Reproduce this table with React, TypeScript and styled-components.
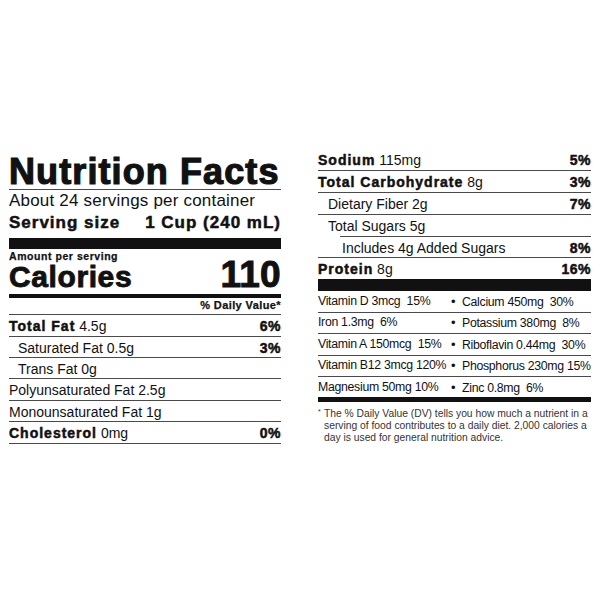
import React from 'react';
import styled, { createGlobalStyle } from 'styled-components';

const Global = createGlobalStyle`
  html, body { margin: 0; padding: 0; background: #fff; }
  body { font-family: "Liberation Sans", Arial, Helvetica, sans-serif; color: #111; }
`;

const LINE = '#4a4a4a';

const Page = styled.div`
  width: 600px;
  height: 600px;
  box-sizing: border-box;
  display: flex;
  align-items: flex-start;
  gap: 37px;
  padding: 0 9px;
`;

const Panel = styled.section<{ $top: number; $w: number }>`
  width: ${p => p.$w}px;
  margin-top: ${p => p.$top}px;
  display: flex;
  flex-direction: column;
`;

const Title = styled.h1`
  margin: 0;
  font-size: 36px;
  line-height: 35px;
  font-weight: 700;
  letter-spacing: 1.1px;
  -webkit-text-stroke: 1.2px #111;
  white-space: nowrap;
  border-bottom: 1px solid ${LINE};
`;

const Servings = styled.div`
  margin-top: 2px;
  font-size: 17px;
  line-height: 18px;
  letter-spacing: 0.2px;
  white-space: nowrap;
`;

const ServingSize = styled.div`
  margin-top: 3px;
  display: flex;
  justify-content: space-between;
  font-size: 17px;
  line-height: 20px;
  font-weight: 700;
  letter-spacing: 1px;
  -webkit-text-stroke: 0.5px #111;
  white-space: nowrap;
`;

const Bar = styled.div<{ $h: number; $mt?: number }>`
  height: ${p => p.$h}px;
  margin-top: ${p => p.$mt ?? 0}px;
  background: #111;
  flex-shrink: 0;
`;

const Amount = styled.div`
  margin-top: 1px;
  font-size: 10.5px;
  line-height: 12px;
  font-weight: 700;
  letter-spacing: 0.55px;
  -webkit-text-stroke: 0.25px #111;
`;

const CaloriesRow = styled.div`
  margin-top: 1px;
  display: flex;
  justify-content: space-between;
  align-items: baseline;
  line-height: 24px;
  font-weight: 700;
`;

const CaloriesLabel = styled.span`
  font-size: 30px;
  letter-spacing: 0.6px;
  -webkit-text-stroke: 0.9px #111;
`;

const CaloriesValue = styled.span`
  font-size: 37px;
  letter-spacing: 0.3px;
  -webkit-text-stroke: 1px #111;
`;

const DvHeader = styled.div`
  margin-top: 1.7px;
  padding-bottom: 2px;
  text-align: right;
  font-size: 11px;
  line-height: 13px;
  font-weight: 700;
  letter-spacing: 0.4px;
  -webkit-text-stroke: 0.25px #111;
  border-bottom: 1px solid ${LINE};
`;

const Row = styled.div<{ $h: number; $indent?: number; $line?: boolean; $lineInset?: number }>`
  height: ${p => p.$h}px;
  box-sizing: border-box;
  display: flex;
  justify-content: space-between;
  padding-top: 3px;
  padding-left: ${p => p.$indent ?? 0}px;
  font-size: 14px;
  line-height: 17.4px;
  white-space: pre;
  background: ${p =>
    p.$line
      ? `linear-gradient(${LINE}, ${LINE}) no-repeat right bottom / calc(100% - ${p.$lineInset ?? 0}px) 1px`
      : 'none'};
`;

const Strong = styled.b`
  font-weight: 700;
  letter-spacing: 1px;
  -webkit-text-stroke: 0.5px #111;
`;

const Pct = styled.b`
  font-weight: 700;
  letter-spacing: 0.5px;
  -webkit-text-stroke: 0.5px #111;
`;

const VitRow = styled.div<{ $h: number; $line?: boolean }>`
  height: ${p => p.$h}px;
  box-sizing: border-box;
  display: grid;
  grid-template-columns: 133px 1fr;
  padding-top: 1.5px;
  font-size: 12.3px;
  line-height: 17.4px;
  letter-spacing: -0.3px;
  white-space: pre;
  background: ${p => (p.$line ? `linear-gradient(${LINE}, ${LINE}) no-repeat left bottom / 100% 1px` : 'none')};
`;

const VitCell = styled.span``;

const Bullet = styled.span`
  display: inline-block;
  width: 11px;
  font-size: 13px;
  letter-spacing: 0;
`;

const Footnote = styled.p`
  margin: 6px 0 0;
  padding-left: 6px;
  font-size: 10.3px;
  line-height: 12px;
  color: #333;
  white-space: nowrap;
`;

const Star = styled.span`
  display: inline-block;
  width: 6px;
  margin-left: -6px;
  font-size: 7px;
  vertical-align: 3px;
  line-height: 0;
`;

type Nut = { label: string; bold?: boolean; amount: string; pct?: string; indent?: number; lineInset?: number; line?: boolean; h?: number };

const leftRows: Nut[] = [
  { label: 'Total Fat', bold: true, amount: ' 4.5g', pct: '6%', line: true },
  { label: 'Saturated Fat 0.5g', amount: '', pct: '3%', indent: 9, line: true },
  { label: 'Trans Fat 0g', amount: '', indent: 9, line: true },
  { label: 'Polyunsaturated Fat 2.5g', amount: '', line: true },
  { label: 'Monounsaturated Fat 1g', amount: '', line: true },
  { label: 'Cholesterol', bold: true, amount: ' 0mg', pct: '0%', line: true },
];

const rightRows: Nut[] = [
  { label: 'Sodium', bold: true, amount: ' 115mg', pct: '5%', line: true },
  { label: 'Total Carbohydrate', bold: true, amount: ' 8g', pct: '3%', line: true },
  { label: 'Dietary Fiber 2g', amount: '', pct: '7%', indent: 10, line: true },
  { label: 'Total Sugars 5g', amount: '', indent: 10, line: true, lineInset: 22 },
  { label: 'Includes 4g Added Sugars', amount: '', pct: '8%', indent: 24, line: true },
  { label: 'Protein', bold: true, amount: ' 8g', pct: '16%', h: 21 },
];

const vitamins: [string, string][] = [
  ['Vitamin D 3mcg  15%', 'Calcium 450mg  30%'],
  ['Iron 1.3mg  6%', 'Potassium 380mg  8%'],
  ['Vitamin A 150mcg  15%', 'Riboflavin 0.44mg  30%'],
  ['Vitamin B12 3mcg 120%', 'Phosphorus 230mg 15%'],
  ['Magnesium 50mg 10%', 'Zinc 0.8mg  6%'],
];

const NutRow = ({ n, h }: { n: Nut; h: number }) => (
  <Row $h={n.h ?? h} $indent={n.indent} $line={n.line} $lineInset={n.lineInset}>
    <span>
      {n.bold ? <Strong>{n.label}</Strong> : n.label}
      {n.amount}
    </span>
    {n.pct && <Pct>{n.pct}</Pct>}
  </Row>
);

export default function App() {
  return (
    <>
      <Global />
      <Page>
        <Panel $top={154} $w={272}>
          <Title>Nutrition Facts</Title>
          <Servings>About 24 servings per container</Servings>
          <ServingSize>
            <span>Serving size</span>
            <span>1 Cup (240 mL)</span>
          </ServingSize>
          <Bar $h={11} $mt={5} />
          <Amount>Amount per serving</Amount>
          <CaloriesRow>
            <CaloriesLabel>Calories</CaloriesLabel>
            <CaloriesValue>110</CaloriesValue>
          </CaloriesRow>
          <Bar $h={4} $mt={4.6} />
          <DvHeader>% Daily Value*</DvHeader>
          {leftRows.map(n => (
            <NutRow key={n.label} n={n} h={21.4} />
          ))}
        </Panel>
        <Panel $top={149} $w={273}>
          {rightRows.map(n => (
            <NutRow key={n.label} n={n} h={21.9} />
          ))}
          <Bar $h={12} />
          {vitamins.map(([a, b], i) => (
            <VitRow key={a} $h={i === vitamins.length - 1 ? 19.5 : 21.4} $line={i < vitamins.length - 1}>
              <VitCell>{a}</VitCell>
              <VitCell>
                <Bullet>•</Bullet>
                {b}
              </VitCell>
            </VitRow>
          ))}
          <Bar $h={5} />
          <Footnote>
            <Star>*</Star>The % Daily Value (DV) tells you how much a nutrient in a
            <br />
            serving of food contributes to a daily diet. 2,000 calories a
            <br />
            day is used for general nutrition advice.
          </Footnote>
        </Panel>
      </Page>
    </>
  );
}
